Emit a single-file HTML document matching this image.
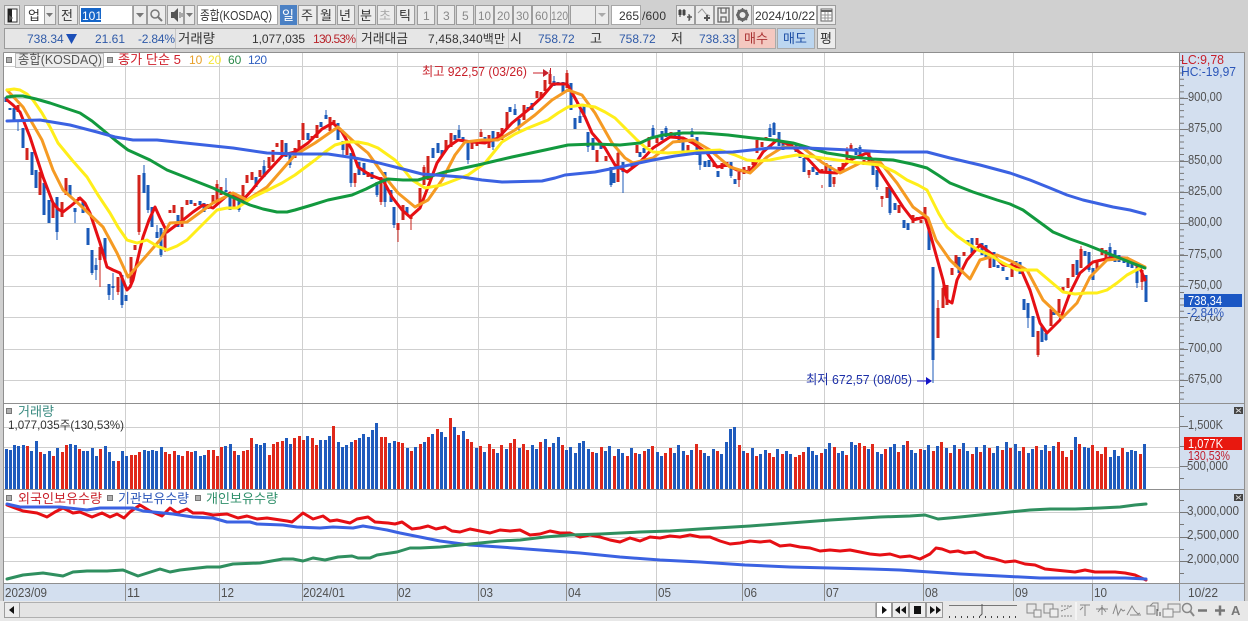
<!DOCTYPE html>
<html><head><meta charset="utf-8">
<style>
html,body{margin:0;padding:0;background:#d0d0d0;width:1248px;height:621px;overflow:hidden}
svg{position:absolute;left:0;top:0;display:block}
text{font-family:"Liberation Sans","Noto Sans CJK KR","NanumGothic",sans-serif;font-size:12px;fill:#333}
.k{font-size:13px}
.b{fill:#ececec;stroke:#9d9d9d}
.w{fill:#fff;stroke:#a8a8a8}
.g{stroke:#cfcfcf;stroke-width:1;fill:none}
.l{fill:none;stroke-width:3;stroke-linejoin:round;stroke-linecap:round}
.a{fill:#505050;font-size:13px}
.t{fill:#2f5aa8}
.m{fill:#b0b0b0;stroke:#777}
#v{position:absolute;left:4.5px;top:404px;height:85px;width:1150px;display:flex;align-items:flex-end}
#v i,#v b{display:block;flex:0 0 3px;margin-right:1.318px}
#v i{background:#1f5bbd}
#v b{background:#e0281a}
</style></head><body>
<svg width="1248" height="621" viewBox="0 0 1248 621" xmlns="http://www.w3.org/2000/svg">
<rect width="1248" height="621" fill="#d0d0d0"/>
<!-- toolbar row 1 -->
<rect class="b" x="4.5" y="5.5" width="15" height="19"/><path d="M8 9h9v13H8z" fill="#fff" stroke="#333"/><path d="M8 9h4v13H8z" fill="#222"/><path d="M9 15l4 3-4 3z" fill="#555"/>
<rect class="w" x="24.5" y="5.5" width="20" height="19"/><text class="k" x="28" y="20">업</text>
<rect class="b" x="44.5" y="5.5" width="11" height="19"/><path d="M46 13h7l-3.500 4z" fill="#777"/>
<rect class="b" x="58.500" y="5.500" width="19" height="19"/><text class="k" x="61" y="20">전</text>
<rect class="w" x="79.500" y="5.500" width="53" height="19"/><rect x="81" y="8" width="20" height="14" fill="#1565c8"/><text x="82" y="20" style="fill:#fff">101</text>
<rect class="b" x="133.500" y="5.500" width="13" height="19"/><path d="M136 13h8l-4 4.500z" fill="#777"/>
<rect class="b" x="147.500" y="5.500" width="18" height="19"/><circle cx="155" cy="14" r="4" fill="none" stroke="#777" stroke-width="1.500"/><path d="M158 17l4 4" stroke="#777" stroke-width="2"/>
<rect class="b" x="167.500" y="5.500" width="16" height="19"/><path d="M171 12h3l4-4v14l-4-4h-3z" fill="#555"/><path d="M180 12v6M182 13v4" stroke="#666"/>
<rect class="b" x="184.500" y="5.500" width="10" height="19"/><path d="M186 13h7l-3.500 4z" fill="#777"/>
<rect class="w" x="197.500" y="5.500" width="80" height="19" stroke="#ddd"/><text class="k" x="200" y="20" textLength="72" lengthAdjust="spacingAndGlyphs">종합(KOSDAQ)</text>
<rect x="280" y="5" width="17" height="20" fill="#4a80c4"/><text class="k" x="282" y="20" style="fill:#fff">일</text>
<rect class="b" x="298.500" y="5.500" width="18" height="19"/><text class="k" x="301" y="20">주</text>
<rect class="b" x="317.500" y="5.500" width="18" height="19"/><text class="k" x="320" y="20">월</text>
<rect class="b" x="337.500" y="5.500" width="17" height="19"/><text class="k" x="339" y="20">년</text>
<rect class="b" x="358.500" y="5.500" width="17" height="19"/><text class="k" x="360" y="20">분</text>
<rect class="b" x="377.500" y="5.500" width="17" height="19"/><text class="k" x="379" y="20" style="fill:#aaa">초</text>
<rect class="b" x="396.500" y="5.500" width="18" height="19"/><text class="k" x="399" y="20">틱</text>
<rect class="b" x="417.500" y="5.500" width="17" height="19"/><text x="423" y="20" style="fill:#888">1</text>
<rect class="b" x="437.500" y="5.500" width="17" height="19"/><text x="443" y="20" style="fill:#888">3</text>
<rect class="b" x="456.500" y="5.500" width="17" height="19"/><text x="462" y="20" style="fill:#888">5</text>
<rect class="b" x="475.500" y="5.500" width="18" height="19"/><text x="478" y="20" textLength="13" lengthAdjust="spacingAndGlyphs" style="fill:#888">10</text>
<rect class="b" x="494.500" y="5.500" width="18" height="19"/><text x="497" y="20" textLength="13" lengthAdjust="spacingAndGlyphs" style="fill:#888">20</text>
<rect class="b" x="513.500" y="5.500" width="18" height="19"/><text x="516" y="20" textLength="13" lengthAdjust="spacingAndGlyphs" style="fill:#888">30</text>
<rect class="b" x="532.500" y="5.500" width="18" height="19"/><text x="535" y="20" textLength="13" lengthAdjust="spacingAndGlyphs" style="fill:#888">60</text>
<rect class="b" x="550.500" y="5.500" width="18" height="19"/><text x="551" y="20" textLength="17" lengthAdjust="spacingAndGlyphs" style="fill:#888">120</text>
<rect class="b" x="570.500" y="5.500" width="25" height="19"/><rect class="b" x="595.500" y="5.500" width="13" height="19"/><path d="M598 13h8l-4 4z" fill="#aaa"/>
<rect class="w" x="611.500" y="5.500" width="29" height="19" stroke="#ddd"/><text x="619" y="20">265</text><text x="642" y="20" textLength="24">/600</text>
<rect class="b" x="676.500" y="5.500" width="18" height="19"/><path d="M680 9v8M684 9v7M689 14v7" stroke="#333"/><path d="M678.500 10h3v5h-3zM682.500 10h3v5h-3z" fill="#444"/><path d="M687 17h5M689.500 15v5" stroke="#555" stroke-width="1.500"/>
<rect class="b" x="695.500" y="5.500" width="18" height="19"/><path d="M698 13l4-4 4 5 4 2" fill="none" stroke="#999"/><path d="M704 18h6M707 15v6" stroke="#555" stroke-width="2"/>
<rect class="b" x="714.500" y="5.500" width="18" height="19"/><path d="M718 8h11v14h-11zM721 8v5h5V8M721 22v-5h5v5" fill="none" stroke="#666" stroke-width="1.300"/>
<rect class="b" x="733.500" y="5.500" width="18" height="19"/><circle cx="742.500" cy="15" r="4.500" fill="none" stroke="#666" stroke-width="3"/><path d="M742.500 8v3M742.500 19v3M736 15h3M746 15h3M738 10l2 2M745 18l2 2M747 10l-2 2M740 18l-2 2" stroke="#666" stroke-width="1.500"/>
<rect class="w" x="753.500" y="5.500" width="63" height="19" stroke="#ccc"/><text x="755" y="20" textLength="60">2024/10/22</text>
<rect class="b" x="817.500" y="5.500" width="18" height="19"/><rect x="821" y="9" width="11" height="12" fill="#fff" stroke="#666"/><path d="M821 10h11v2h-11z" fill="#666"/><path d="M821 15h11M821 18h11M825 12v9M828 12v9" stroke="#999"/>
<!-- row 2 -->
<rect x="4.500" y="28.500" width="733" height="20" fill="#e6e6e6" stroke="#9a9a9a"/>
<path d="M175.500 29v19M356.500 29v19M508.500 29v19" stroke="#c8c8c8"/>
<text x="27" y="43" class="t">738.34</text><path d="M66 34h11l-5.500 10z" fill="#1c4fb8"/>
<text x="95" y="43" class="t">21.61</text><text x="138" y="43" class="t" textLength="37">-2.84%</text>
<text class="k" x="178" y="43" textLength="37" lengthAdjust="spacingAndGlyphs">거래량</text>
<text x="252" y="43" textLength="53">1,077,035</text>
<text x="313" y="43" style="fill:#b8232a" textLength="43">130.53%</text>
<text class="k" x="361" y="43" textLength="47" lengthAdjust="spacingAndGlyphs">거래대금</text>
<text x="428" y="43" textLength="77">7,458,340백만</text>
<text class="k" x="510" y="43">시</text><text x="538" y="43" class="t">758.72</text>
<text class="k" x="590" y="43">고</text><text x="619" y="43" class="t">758.72</text>
<text class="k" x="671" y="43">저</text><text x="699" y="43" class="t">738.33</text>
<rect x="738.500" y="28.500" width="37" height="20" fill="#f4c8c0" stroke="#aaa"/><text class="k" x="744" y="43" style="fill:#a33">매수</text>
<rect x="777.500" y="28.500" width="37" height="20" fill="#bcd6f0" stroke="#aaa"/><text class="k" x="783" y="43" style="fill:#1d4fa5">매도</text>
<rect class="b" x="817.500" y="28.500" width="18" height="20"/><text class="k" x="820" y="43">평</text>
<!-- chart areas -->
<rect x="4" y="53" width="1176" height="530" fill="#fff"/>
<rect x="1180" y="53" width="64" height="548" fill="#d3dfef"/>
<rect x="4" y="584" width="1240" height="17" fill="#d3dfef"/>
<path class="g" d="M4 66.500H1180M4 98.500H1180M4 129.500H1180M4 161.500H1180M4 192.500H1180M4 223.500H1180M4 255.500H1180M4 286.500H1180M4 317.500H1180M4 349.500H1180M4 380.500H1180M4 427.500H1180M4 447.500H1180M4 467.500H1180M4 512.500H1180M4 537.500H1180M4 561.500H1180M125.500 53V583M219.500 53V583M302.500 53V583M397.500 53V583M478.500 53V583M566.500 53V583M656.500 53V583M742.500 53V583M824.500 53V583M923.500 53V583M1013.500 53V583M1092.500 53V583"/>
<path d="M3.500 52.500H1244.500V601.500M3.500 52.500V601.500M3 403.500H1244M3 489.500H1244M3 583.500H1244M1179.500 53V601" fill="none" stroke="#8f8f8f"/>
<path d="M125.500 584v17M219.500 584v17M302.500 584v17M397.500 584v17M478.500 584v17M566.500 584v17M656.500 584v17M742.500 584v17M824.500 584v17M923.500 584v17M1013.500 584v17M1092.500 584v17" stroke="#8f8f8f"/>
<!-- axis ticks -->
<line x1="1182" x2="1182" y1="60" y2="403" stroke="#777" stroke-width="4" stroke-dasharray="1 5.270"/>
<path d="M1180 98.500h8M1180 129.500h8M1180 161.500h8M1180 192.500h8M1180 223.500h8M1180 255.500h8M1180 286.500h8M1180 317.500h8M1180 349.500h8M1180 380.500h8M1180 426.500h8M1180 466.500h8M1180 512.500h8M1180 537.500h8M1180 561.500h8M1180 416.500h4M1180 446.500h4M1180 478.500h4M1180 500.500h4M1180 524.500h4M1180 549.500h4M1180 573.500h4" stroke="#777"/>
<!-- wicks -->
<path stroke="#1b5ab8" stroke-width="1" fill="none" d="M18 120V131M57 232V240M75 212V223M92 273V275M96 258V280M109 295V300M113 273V300M122 300V308M144 165V173M148 210V213M157 225V232M161 255V257M226 178V190M239 210V212M264 160V166M290 165V168M326 110V116M343 150V155M351 183V187M377 195V197M385 202V207M394 225V228M433 148V158M459 125V132M468 160V164M493 147V150M515 104V110M519 128V133M554 76V82M580 110V116M588 147V152M611 185V187M623 172V193M653 128V125M666 126V131M692 128V131M700 165V170M731 176V178M770 124V128M774 123V122M860 145V147M877 187V190M890 213V215M933 360V383M1028 318V328M1046 338V341M1089 270V272M1110 243V247M1137 283V288"/>
<path stroke="#c8201a" stroke-width="1" fill="none" d="M100 260V287M118 292V295M139 232V235M165 250V252M217 184V180M355 183V187M381 202V205M398 230V242M411 218V230M424 167V165M481 132V129M507 128V130M550 70V86M567 73V70M618 153V150M739 180V187M809 175V178M822 185V188M834 184V187M847 150V147M851 145V143M882 199V207M938 338V300M943 308V285M1038 355V357M1059 313V316M1081 249V246M1142 282V290"/>
<!-- candles blue -->
<path stroke="#1b5ab8" stroke-width="3" fill="none" d="M6 97V102M10 108V110M14 108V120M23 128V148M32 152V175M36 170V188M44 183V215M49 200V223M57 197V232M70 185V197M75 208V212M83 202V213M88 228V245M92 250V273M96 265V270M105 238V260M109 284V295M113 286V288M122 275V305M126 295V301M144 173V193M148 185V210M152 207V227M157 232V238M161 228V255M178 215V227M191 200V204M200 201V205M204 203V212M226 190V192M230 195V210M239 198V210M256 177V187M264 166V177M286 143V157M290 152V165M308 133V140M321 122V127M326 115V119M338 123V140M343 141V150M351 153V183M359 162V175M364 163V175M372 172V179M377 182V195M385 172V202M391 190V202M394 207V225M407 207V215M433 148V158M438 143V153M442 150V155M455 135V140M459 130V138M463 137V142M468 140V160M485 137V142M493 131V147M510 107V112M515 109V115M519 119V128M528 107V110M532 103V110M554 81V86M558 82V85M563 82V93M571 83V110M575 118V129M580 116V123M584 105V117M588 132V147M593 138V150M601 145V149M611 167V185M614 173V183M623 162V172M632 162V167M640 152V157M644 148V153M653 128V138M662 131V140M666 128V137M675 133V138M679 130V143M683 140V155M692 131V137M697 137V155M700 153V165M705 161V167M709 160V167M718 171V177M731 162V176M735 179V184M770 128V137M774 123V135M779 132V146M783 143V150M788 143V149M796 145V152M800 155V158M804 158V172M813 167V172M817 172V175M830 165V187M856 148V155M860 147V158M873 160V175M877 170V187M890 188V213M895 203V210M904 220V228M908 223V230M929 223V250M933 267V360M959 257V273M968 240V243M972 238V253M982 243V255M986 245V258M994 252V267M998 265V268M1003 267V271M1007 277V280M1016 261V264M1020 262V274M1024 299V310M1028 303V318M1033 316V337M1042 326V342M1046 333V340M1054 312V315M1077 260V275M1085 251V256M1089 252V270M1093 268V280M1110 247V257M1115 250V262M1119 255V262M1124 258V263M1128 262V267M1132 262V268M1137 267V283M1146 275V302"/>
<!-- candles red -->
<path stroke="#d2231c" stroke-width="3" fill="none" d="M18 105V112M27 148V160M40 172V195M53 202V218M62 202V217M66 178V195M79 197V200M100 247V260M118 277V292M131 257V283M135 245V250M139 175V232M165 230V250M170 210V213M174 205V213M182 207V227M187 200V205M195 203V206M208 204V209M213 195V203M217 184V200M221 187V195M234 197V207M243 185V200M247 175V183M252 172V180M260 170V177M269 157V168M273 150V162M277 143V147M282 140V155M295 148V158M299 140V150M303 123V140M312 136V140M317 125V138M330 117V131M334 120V125M347 142V155M355 173V183M368 172V177M381 177V202M398 223V230M403 205V220M411 216V219M420 188V205M424 167V185M428 156V180M446 140V150M451 133V147M472 143V149M477 142V146M481 132V137M489 135V148M498 132V140M502 128V140M507 112V128M524 105V120M537 91V98M541 92V97M545 80V91M550 74V84M567 73V88M597 150V162M606 156V161M618 153V182M637 145V153M649 137V147M657 138V143M671 132V138M688 145V153M714 163V167M722 163V169M727 162V167M739 172V180M744 167V174M749 166V170M753 160V165M757 140V153M762 142V147M766 137V140M792 143V148M809 170V175M822 169V172M826 163V173M834 177V184M839 167V172M843 163V172M847 150V162M851 145V150M864 160V165M869 152V163M882 196V199M887 187V198M899 205V213M913 215V223M917 217V220M921 220V223M925 207V215M938 308V338M943 288V308M947 285V305M952 268V275M956 255V267M964 252V256M977 238V245M990 257V268M1012 263V277M1038 331V355M1051 309V326M1059 299V313M1063 287V292M1068 278V288M1073 264V277M1081 249V268M1097 260V270M1102 248V255M1106 250V260M1142 270V282"/>
<!-- MAs -->
<polyline class="l" stroke="#e60f14" points="7,100 13,105 20,112 30,137 43,177 53,203 58,209 63,212 72,205 80,198 85,203 90,213 100,243 107,267 113,270 120,273 127,290 130,287 133,280 138,258 143,237 149,220 155,207 160,218 167,232 175,226 183,220 193,212 203,205 213,208 222,200 230,193 243,200 252,190 260,180 272,167 283,155 295,152 308,143 322,129 333,123 342,132 352,150 358,167 370,175 383,180 392,197 402,210 410,217 420,208 428,187 437,163 448,147 458,140 472,142 485,143 498,138 512,123 528,110 542,97 553,84 567,84 575,98 585,117 592,133 605,148 615,165 627,172 640,162 653,148 670,137 683,138 693,143 707,153 717,167 727,165 737,170 750,172 763,152 777,140 790,145 807,158 820,172 837,173 850,160 867,153 877,167 890,187 903,207 913,220 925,217 930,233 943,280 947,300 952,303 957,280 967,260 980,245 993,255 1003,265 1020,267 1030,290 1040,323 1047,333 1060,320 1070,293 1080,273 1093,262 1110,258 1127,258 1140,268 1145,280"/>
<polyline class="l" stroke="#f59a23" points="7,90 23,107 42,140 53,170 63,190 80,205 103,227 117,253 128,277 140,263 160,240 170,223 187,222 213,203 233,193 247,200 267,187 295,155 315,143 338,127 352,140 368,153 385,177 398,193 415,207 428,200 442,180 455,155 465,142 482,140 498,140 515,130 535,115 552,100 568,90 582,95 595,113 612,143 625,158 633,163 653,158 673,142 693,140 710,150 730,167 750,173 767,157 783,147 803,148 823,163 840,173 860,163 880,162 897,183 913,207 928,218 936,240 950,260 970,279 980,260 997,255 1013,262 1027,270 1043,300 1062,318 1077,303 1090,277 1107,260 1127,258 1145,267"/>
<polyline class="l" stroke="#ffee1a" points="7,90 14,89 20,90 27,94 33,100 42,113 50,127 58,143 72,160 87,177 98,195 110,213 118,227 127,240 137,243 147,240 157,246 167,250 177,246 187,240 202,225 217,210 227,208 237,208 253,197 268,190 282,183 295,175 315,160 325,152 335,145 346,142 358,142 368,144 378,148 395,160 404,170 412,180 425,188 442,185 468,175 485,163 494,152 502,142 515,134 528,128 548,120 558,113 568,107 582,105 595,107 605,112 615,118 627,130 637,140 645,147 653,152 668,153 683,152 700,151 720,150 735,155 747,160 758,161 770,160 785,157 797,155 815,157 837,160 860,163 880,165 895,172 907,180 918,185 927,190 932,200 939,214 947,227 957,236 967,243 978,250 990,255 1003,263 1017,270 1027,270 1037,270 1050,281 1063,292 1075,294 1087,293 1097,293 1107,290 1117,283 1127,275 1140,268"/>
<polyline class="l" stroke="#12993e" points="7,97 15,96 23,96 36,99 50,103 65,108 80,113 92,121 103,130 115,140 128,150 150,160 167,170 190,179 213,188 232,197 250,205 263,209 277,212 287,212 295,210 312,205 328,200 352,195 366,189 378,183 388,179 403,180 418,180 445,172 478,165 512,157 545,150 568,145 595,144 620,145 640,143 651,138 663,135 683,133 703,133 728,135 753,138 773,140 793,143 810,148 827,153 853,157 873,159 893,160 912,164 927,168 938,175 950,183 973,192 997,200 1010,204 1023,210 1038,221 1053,232 1070,239 1087,245 1102,251 1117,257 1132,263 1145,268"/>
<polyline class="l" stroke="#3b62e2" points="7,121 40,120 70,125 97,132 115,137 133,140 157,140 195,144 233,148 267,153 295,154 328,154 355,158 375,162 395,167 422,174 462,177 482,180 502,182 542,181 555,178 565,175 595,172 620,167 653,160 675,156 697,153 733,152 770,148 807,148 850,150 887,152 927,152 950,158 980,165 1010,173 1030,180 1050,188 1067,195 1083,200 1113,207 1130,210 1145,214"/>
<!-- third panel lines -->
<polyline class="l" stroke="#e60f14" points="7,505 23,511 37,513 47,517 55,512 63,508 73,513 80,512 92,517 102,513 110,517 117,514 124,518 130,512 140,505 150,511 162,516 170,508 177,513 187,509 193,513 203,513 213,515 227,514 238,518 247,516 257,519 267,518 287,521 292,522 303,513 313,519 323,516 330,521 337,520 350,523 357,519 368,517 375,522 388,523 395,524 402,522 412,529 420,528 428,526 436,529 445,527 452,531 460,532 470,529 480,531 490,533 500,530 510,531 520,530 530,535 540,534 550,531 560,533 570,533 580,537 590,535 600,537 610,540 620,542 630,538 640,541 650,537 660,538 670,536 680,537 690,535 700,537 710,537 720,541 730,544 740,543 750,541 760,542 770,541 780,546 790,545 800,547 810,548 820,551 830,550 840,551 850,550 860,552 870,554 880,555 890,554 900,557 910,556 920,559 930,554 936,548 942,549 950,552 958,551 965,553 975,552 985,557 995,559 1005,562 1015,561 1025,564 1035,565 1045,569 1055,570 1065,571 1075,572 1085,570 1095,572 1105,572 1115,572 1125,573 1135,575 1146,580"/>
<polyline class="l" stroke="#3b62e2" points="7,504 20,507 43,507 60,507 87,510 100,508 133,508 143,511 173,514 193,517 213,518 227,522 250,522 257,524 283,525 297,527 320,528 333,527 353,528 363,526 387,530 400,533 420,537 440,541 470,545 500,547 540,550 580,553 620,557 660,560 700,562 745,565 790,567 830,568 870,569 900,570 930,572 960,574 1000,576 1040,578 1090,578 1125,578 1146,579"/>
<polyline class="l" stroke="#2f8f5f" points="7,579 23,575 43,573 63,576 73,572 87,571 107,571 123,570 138,576 160,569 170,572 180,570 207,567 220,567 233,564 260,563 283,559 293,559 303,561 313,558 325,560 338,557 352,556 358,558 370,558 377,555 397,552 410,548 420,548 440,547 460,545 480,543 500,541 520,540 545,537 570,535 600,534 640,532 670,531 700,529 750,526 790,523 830,520 880,517 910,516 925,515 938,519 960,517 1000,513 1030,510 1050,509 1075,509 1100,508 1120,507 1135,505 1146,504"/>
<!-- chart labels -->
<rect class="m" x="6.500" y="57.500" width="5" height="5"/>
<rect x="15.500" y="53.500" width="88" height="14" fill="#eee" stroke="#bbb"/><text class="k" x="18" y="64" textLength="84" lengthAdjust="spacingAndGlyphs" style="fill:#555">종합(KOSDAQ)</text>
<rect class="m" x="107.500" y="57.500" width="5" height="5"/>
<text class="k" x="118" y="64" style="fill:#d01e2a" textLength="63" lengthAdjust="spacingAndGlyphs">종가 단순 5</text><text x="189" y="64" style="fill:#e8a02a">10</text><text x="208" y="64" style="fill:#f5e63a">20</text><text x="228" y="64" style="fill:#2c8a4a">60</text><text x="248" y="64" style="fill:#2f5fc0" textLength="19">120</text>
<text class="k" x="422" y="76" style="fill:#c8202a" textLength="105" lengthAdjust="spacingAndGlyphs">최고 922,57 (03/26)</text><path d="M533 73h11" stroke="#c8202a"/><path d="M543 69l6 4-6 4z" fill="#c8202a"/><path d="M550.500 68v10" stroke="#c8202a"/>
<text class="k" x="806" y="384" style="fill:#1c2fa8" textLength="106" lengthAdjust="spacingAndGlyphs">최저 672,57 (08/05)</text><path d="M917 381h10" stroke="#1414c8"/><path d="M926 377l6 4-6 4z" fill="#1414c8"/>
<text class="k" x="1181" y="64" style="fill:#c8202a" textLength="43" lengthAdjust="spacingAndGlyphs">LC:9,78</text><text class="k" x="1181" y="76" style="fill:#2a55b8" textLength="55" lengthAdjust="spacingAndGlyphs">HC:-19,97</text>
<text class="a" x="1188" y="101" textLength="34" lengthAdjust="spacingAndGlyphs">900,00</text><text class="a" x="1188" y="132" textLength="34" lengthAdjust="spacingAndGlyphs">875,00</text><text class="a" x="1188" y="164" textLength="34" lengthAdjust="spacingAndGlyphs">850,00</text><text class="a" x="1188" y="195" textLength="34" lengthAdjust="spacingAndGlyphs">825,00</text><text class="a" x="1188" y="226" textLength="34" lengthAdjust="spacingAndGlyphs">800,00</text><text class="a" x="1188" y="258" textLength="34" lengthAdjust="spacingAndGlyphs">775,00</text><text class="a" x="1188" y="289" textLength="34" lengthAdjust="spacingAndGlyphs">750,00</text><text class="a" x="1188" y="321" textLength="34" lengthAdjust="spacingAndGlyphs">725,00</text><text class="a" x="1188" y="352" textLength="34" lengthAdjust="spacingAndGlyphs">700,00</text><text class="a" x="1188" y="383" textLength="34" lengthAdjust="spacingAndGlyphs">675,00</text>
<rect x="1184" y="294" width="58" height="13" fill="#1b57c4"/><text class="k" x="1188" y="305" style="fill:#fff" textLength="34" lengthAdjust="spacingAndGlyphs">738,34</text>
<rect x="1186" y="307" width="40" height="9" fill="#d3dfef"/>
<text class="k" x="1187" y="317" style="fill:#2a55b8" textLength="37" lengthAdjust="spacingAndGlyphs">-2,84%</text>
<rect class="m" x="6.500" y="408.500" width="5" height="5"/><text class="k" x="18" y="416" style="fill:#3a8a80" textLength="36" lengthAdjust="spacingAndGlyphs">거래량</text>
<text x="8" y="429" textLength="116" lengthAdjust="spacingAndGlyphs">1,077,035주(130,53%)</text>
<text class="a" x="1188" y="429" textLength="35" lengthAdjust="spacingAndGlyphs">1,500K</text>
<text class="a" x="1187" y="470" textLength="41" lengthAdjust="spacingAndGlyphs">500,000</text>
<rect x="1184" y="437" width="58" height="13" fill="#e8180f"/><text class="k" x="1188" y="448" style="fill:#fff" textLength="35" lengthAdjust="spacingAndGlyphs">1,077K</text>
<rect x="1186" y="450" width="44" height="9" fill="#d3dfef"/>
<text class="k" x="1188" y="460" style="fill:#c02030" textLength="42" lengthAdjust="spacingAndGlyphs">130,53%</text>
<rect class="m" x="6.500" y="495.500" width="5" height="5"/><text class="k" x="18" y="503" style="fill:#c8202a" textLength="84" lengthAdjust="spacingAndGlyphs">외국인보유수량</text>
<rect class="m" x="107.500" y="495.500" width="5" height="5"/><text class="k" x="118" y="503" style="fill:#2a55b8" textLength="71" lengthAdjust="spacingAndGlyphs">기관보유수량</text>
<rect class="m" x="195.500" y="495.500" width="5" height="5"/><text class="k" x="206" y="503" style="fill:#2f8f6a" textLength="72" lengthAdjust="spacingAndGlyphs">개인보유수량</text>
<text class="a" x="1187" y="515" textLength="52" lengthAdjust="spacingAndGlyphs">3,000,000</text><text class="a" x="1187" y="539" textLength="52" lengthAdjust="spacingAndGlyphs">2,500,000</text><text class="a" x="1187" y="563" textLength="52" lengthAdjust="spacingAndGlyphs">2,000,000</text>
<rect x="1234" y="407" width="9" height="7" fill="#444"/><path d="M1236 408.500l5 4M1241 408.500l-5 4" stroke="#ddd"/>
<rect x="1234" y="494" width="9" height="7" fill="#444"/><path d="M1236 495.500l5 4M1241 495.500l-5 4" stroke="#ddd"/>
<!-- x axis labels -->
<text class="a" x="5" y="597" textLength="42" lengthAdjust="spacingAndGlyphs">2023/09</text><text class="a" x="127" y="597" textLength="13" lengthAdjust="spacingAndGlyphs">11</text><text class="a" x="221" y="597" textLength="13" lengthAdjust="spacingAndGlyphs">12</text><text class="a" x="303" y="597" textLength="42" lengthAdjust="spacingAndGlyphs">2024/01</text><text class="a" x="398" y="597" textLength="13" lengthAdjust="spacingAndGlyphs">02</text><text class="a" x="480" y="597" textLength="13" lengthAdjust="spacingAndGlyphs">03</text><text class="a" x="568" y="597" textLength="13" lengthAdjust="spacingAndGlyphs">04</text><text class="a" x="658" y="597" textLength="13" lengthAdjust="spacingAndGlyphs">05</text><text class="a" x="744" y="597" textLength="13" lengthAdjust="spacingAndGlyphs">06</text><text class="a" x="826" y="597" textLength="13" lengthAdjust="spacingAndGlyphs">07</text><text class="a" x="925" y="597" textLength="13" lengthAdjust="spacingAndGlyphs">08</text><text class="a" x="1015" y="597" textLength="13" lengthAdjust="spacingAndGlyphs">09</text><text class="a" x="1094" y="597" textLength="13" lengthAdjust="spacingAndGlyphs">10</text><text class="a" x="1188" y="597" textLength="30" lengthAdjust="spacingAndGlyphs">10/22</text>
<!-- bottom bar -->
<rect x="0" y="601" width="1248" height="20" fill="#e8e8e8"/>
<rect x="4.500" y="602.500" width="871" height="15" fill="#e4e4e4" stroke="#b0b0b0"/>
<rect class="b" x="4.500" y="602.500" width="15" height="15"/><path d="M14 606v8l-5-4z" fill="#111"/>
<rect x="876.500" y="602.500" width="15" height="15" fill="#fff" stroke="#999"/><path d="M882 606v8l5-4z" fill="#111"/>
<rect x="892.500" y="602.500" width="16" height="15" fill="#eee" stroke="#999"/><path d="M900 606v8l-5-4zM906 606v8l-5-4z" fill="#111"/>
<rect x="909.500" y="602.500" width="16" height="15" fill="#eee" stroke="#999"/><rect x="914" y="606" width="7" height="8" fill="#111"/>
<rect x="926.500" y="602.500" width="16" height="15" fill="#eee" stroke="#999"/><path d="M930 606v8l5-4zM936 606v8l5-4z" fill="#111"/>
<path d="M949 605.500h68" stroke="#777"/><path d="M982 604v10l-2 2" stroke="#555" fill="none"/><line x1="949" x2="1017" y1="617" y2="617" stroke="#444" stroke-width="2" stroke-dasharray="1 5"/>
<g fill="none" stroke="#888">
<rect x="1027" y="604" width="9" height="9"/><rect x="1034" y="610" width="7" height="7" fill="#eee"/>
<rect x="1044" y="604" width="9" height="9"/><rect x="1050" y="609" width="8" height="8" fill="#eee"/>
<path d="M1061 606h11M1061 611l5-2 5-3M1061 616h11" stroke-dasharray="2 1"/>
<path d="M1076 602v18" stroke="#fff"/>
<path d="M1080 605h10M1085 605v11M1080 610l3-3"/>
<path d="M1096 609h12M1102 605v10M1098 612l4-5 4 5"/>
<path d="M1113 614l3-9 2 10 3-6 2 2 2-1"/>
<path d="M1127 615l5-9 3 5 3 3 2-1M1130 615h11"/>
<path d="M1147 606h8v8h-8zM1150 606l3-3h5v8"/><path d="M1157 609v7M1160 612v4M1163 610v6" stroke="#555"/>
<rect x="1168" y="604" width="12" height="8"/><rect x="1163" y="609" width="10" height="8" fill="#eee"/>
<circle cx="1187" cy="608" r="4.500" stroke-width="1.500"/><path d="M1190 611l4 5" stroke-width="2"/>
</g>
<path d="M1198 610.500h9M1215 610.500h10M1220 605.500v10" stroke="#777" stroke-width="2.500"/>
<text x="1231" y="615" style="font-weight:bold;fill:#777;font-size:13px">A</text>
</svg>
<div id="v"><i style=height:40px></i><i style=height:39px></i><i style=height:44px></i><i style=height:43px></i><i style=height:44px></i><b style=height:43px></b><i style=height:38px></i><i style=height:48px></i><b style=height:37px></b><i style=height:35px></i><i style=height:38px></i><b style=height:33px></b><i style=height:41px></i><b style=height:37px></b><b style=height:44px></b><i style=height:45px></i><i style=height:44px></i><b style=height:40px></b><i style=height:38px></i><i style=height:38px></i><i style=height:41px></i><i style=height:33px></i><b style=height:40px></b><i style=height:43px></i><i style=height:37px></i><i style=height:28px></i><b style=height:28px></b><i style=height:38px></i><i style=height:33px></i><b style=height:34px></b><b style=height:34px></b><b style=height:37px></b><i style=height:39px></i><i style=height:38px></i><i style=height:39px></i><i style=height:38px></i><i style=height:42px></i><b style=height:37px></b><b style=height:35px></b><b style=height:38px></b><i style=height:34px></i><b style=height:33px></b><b style=height:38px></b><b style=height:37px></b><i style=height:38px></i><i style=height:33px></i><i style=height:34px></i><b style=height:39px></b><b style=height:39px></b><b style=height:33px></b><b style=height:42px></b><i style=height:43px></i><i style=height:45px></i><b style=height:38px></b><i style=height:34px></i><b style=height:38px></b><b style=height:39px></b><b style=height:51px></b><i style=height:45px></i><i style=height:44px></i><i style=height:46px></i><b style=height:34px></b><b style=height:45px></b><b style=height:47px></b><b style=height:48px></b><i style=height:51px></i><i style=height:45px></i><b style=height:51px></b><b style=height:53px></b><b style=height:49px></b><i style=height:53px></i><b style=height:51px></b><b style=height:44px></b><i style=height:49px></i><i style=height:49px></i><i style=height:53px></i><b style=height:63px></b><i style=height:47px></i><i style=height:42px></i><i style=height:44px></i><i style=height:47px></i><b style=height:49px></b><i style=height:51px></i><i style=height:55px></i><i style=height:52px></i><i style=height:59px></i><i style=height:66px></i><b style=height:52px></b><b style=height:52px></b><i style=height:46px></i><i style=height:48px></i><b style=height:47px></b><b style=height:46px></b><i style=height:41px></i><b style=height:38px></b><i style=height:42px></i><b style=height:45px></b><i style=height:47px></i><b style=height:52px></b><i style=height:55px></i><b style=height:60px></b><i style=height:57px></i><i style=height:52px></i><b style=height:71px></b><i style=height:62px></i><b style=height:54px></b><i style=height:58px></i><b style=height:50px></b><b style=height:47px></b><i style=height:41px></i><b style=height:43px></b><i style=height:37px></i><b style=height:45px></b><b style=height:40px></b><i style=height:36px></i><b style=height:44px></b><i style=height:40px></i><b style=height:46px></b><b style=height:50px></b><i style=height:41px></i><b style=height:45px></b><b style=height:39px></b><i style=height:44px></i><i style=height:40px></i><b style=height:47px></b><i style=height:50px></i><b style=height:42px></b><i style=height:46px></i><i style=height:52px></i><b style=height:44px></b><i style=height:39px></i><i style=height:42px></i><i style=height:36px></i><i style=height:46px></i><i style=height:48px></i><i style=height:40px></i><b style=height:37px></b><i style=height:36px></i><b style=height:42px></b><i style=height:38px></i><i style=height:43px></i><b style=height:33px></b><i style=height:40px></i><i style=height:36px></i><b style=height:33px></b><i style=height:41px></i><b style=height:36px></b><i style=height:35px></i><b style=height:38px></b><i style=height:40px></i><b style=height:43px></b><i style=height:37px></i><i style=height:33px></i><b style=height:36px></b><b style=height:41px></b><i style=height:36px></i><i style=height:44px></i><i style=height:38px></i><b style=height:34px></b><i style=height:39px></i><b style=height:45px></b><b style=height:39px></b><i style=height:36px></i><i style=height:33px></i><i style=height:40px></i><b style=height:38px></b><i style=height:35px></i><i style=height:47px></i><i style=height:60px></i><i style=height:62px></i><b style=height:44px></b><i style=height:38px></i><b style=height:36px></b><i style=height:41px></i><b style=height:33px></b><i style=height:35px></i><i style=height:39px></i><b style=height:36px></b><b style=height:32px></b><i style=height:40px></i><b style=height:35px></b><i style=height:38px></i><i style=height:35px></i><b style=height:32px></b><b style=height:34px></b><b style=height:37px></b><i style=height:42px></i><i style=height:38px></i><i style=height:34px></i><b style=height:36px></b><i style=height:40px></i><i style=height:46px></i><b style=height:42px></b><i style=height:36px></i><i style=height:38px></i><b style=height:34px></b><i style=height:47px></i><i style=height:44px></i><b style=height:46px></b><b style=height:43px></b><i style=height:40px></i><b style=height:45px></b><i style=height:37px></i><i style=height:35px></i><b style=height:40px></b><i style=height:42px></i><i style=height:45px></i><b style=height:37px></b><i style=height:44px></i><b style=height:48px></b><i style=height:39px></i><i style=height:36px></i><b style=height:40px></b><i style=height:39px></i><i style=height:44px></i><b style=height:38px></b><i style=height:43px></i><b style=height:47px></b><i style=height:41px></i><b style=height:36px></b><i style=height:44px></i><b style=height:40px></b><i style=height:46px></i><i style=height:38px></i><b style=height:35px></b><i style=height:42px></i><b style=height:37px></b><i style=height:44px></i><b style=height:41px></b><i style=height:36px></i><i style=height:43px></i><b style=height:39px></b><i style=height:47px></i><b style=height:41px></b><i style=height:45px></i><i style=height:38px></i><b style=height:42px></b><i style=height:36px></i><i style=height:40px></i><b style=height:43px></b><i style=height:39px></i><i style=height:44px></i><b style=height:38px></b><i style=height:43px></i><b style=height:47px></b><b style=height:38px></b><b style=height:32px></b><b style=height:39px></b><i style=height:52px></i><b style=height:45px></b><i style=height:42px></i><i style=height:41px></i><b style=height:44px></b><b style=height:38px></b><b style=height:35px></b><b style=height:42px></b><i style=height:32px></i><i style=height:39px></i><i style=height:33px></i><b style=height:41px></b><i style=height:37px></i><i style=height:39px></i><i style=height:38px></i><b style=height:35px></b><i style=height:45px></i></div>
</body></html>
